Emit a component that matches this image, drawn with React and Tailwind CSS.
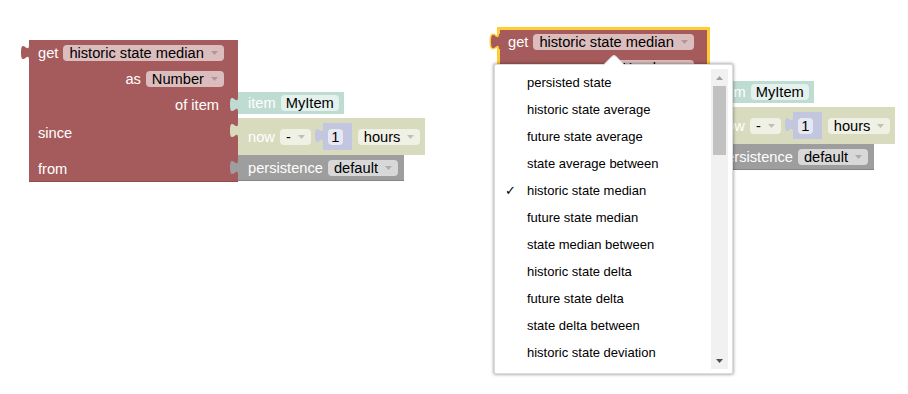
import React from "react";

function Tab({ fill, selected }) {
  return (
    <svg
      width="11"
      height="15"
      viewBox="0 0 11 15"
      overflow="visible"
      className="absolute left-[-8px] top-[5px] z-10"
    >
      {selected && (
        <path d="M8 0 C8 10 0 -8 0 7.5 S8 5 8 15" fill="none" stroke="#ffcc33" strokeWidth="3" />
      )}
      <path d="M11 0 H8 C8 10 0 -8 0 7.5 S8 5 8 15 H11 Z" fill={fill} />
    </svg>
  );
}

function Arrow({ className }) {
  return (
    <svg width="7" height="4" viewBox="0 0 7 4" className={className}>
      <path d="M0 0 H7 L3.5 4 Z" fill="currentColor" />
    </svg>
  );
}

function Dropdown({ text, bg }) {
  return (
    <div className={"flex items-center h-[16px] rounded-[4px] pl-[6px] pr-[6px] " + bg}>
      <span className="text-black leading-[16px]">{text}</span>
      <Arrow className="ml-[7px] text-black/20" />
    </div>
  );
}

function ItemBlock() {
  return (
    <div className="relative flex items-center h-[22px] bg-[#bfdcd2] pl-[10px] pr-[5px] gap-[5px]">
      <Tab fill="#bfdcd2" />
      <span className="leading-[16px]">item</span>
      <div className="h-[16px] rounded-[4px] bg-[#e5f1ed] px-[5px] text-black leading-[16px]">MyItem</div>
    </div>
  );
}

function NowBlock() {
  return (
    <div className="relative flex items-center h-[37px] bg-[#d9dbbe] pl-[10px] pr-[5px]">
      <Tab fill="#d9dbbe" />
      <span className="leading-[16px]">now</span>
      <div className="ml-[5px]">
        <Dropdown text="-" bg="bg-[#f0f1e5]" />
      </div>
      <div className="relative ml-[12px] flex items-center h-[27px] bg-[#c3c6df] pl-[5px] pr-[9px]">
        <Tab fill="#c3c6df" />
        <div className="h-[16px] w-[15px] rounded-[4px] bg-[#e7e8f2] text-black leading-[16px] text-center">1</div>
      </div>
      <div className="ml-[6px]">
        <Dropdown text="hours" bg="bg-[#f0f1e5]" />
      </div>
    </div>
  );
}

function PersistenceBlock() {
  return (
    <div className="relative flex items-center h-[25px] bg-[#9e9e9e] pl-[10px] pr-[6px] gap-[5px] shadow-[0_1px_0_#858585]">
      <Tab fill="#9e9e9e" />
      <span className="leading-[16px]">persistence</span>
      <Dropdown text="default" bg="bg-[#d8d8d8]" />
    </div>
  );
}

function Block({ selected }) {
  return (
    <div className="flex text-[14.67px] text-white">
      <div
        className={
          "relative w-[209px] bg-[#a55b5b] " +
          (selected
            ? "outline-[3px] outline-solid outline-[#ffcc33] outline-offset-[-1px]"
            : "shadow-[0_1px_0_#8d4d4d]")
        }
      >
        <Tab fill="#a55b5b" selected={selected} />
        <div className="h-[26px] flex items-center pl-[9px] gap-[5px]">
          <span className="leading-[16px]">get</span>
          <Dropdown text="historic state median" bg="bg-[#dbbdbd]" />
        </div>
        <div className="h-[25px] flex items-center justify-end pr-[14px] gap-[5px]">
          <span className="leading-[16px]">as</span>
          <Dropdown text="Number" bg="bg-[#dbbdbd]" />
        </div>
        <div className="h-[25px] flex justify-end pr-[19px] pt-[6px]">
          <span className="leading-[17px]">of item</span>
        </div>
        <div className="h-[39px] pl-[9px] pt-[6px]">
          <span className="leading-[17px]">since</span>
        </div>
        <div className="h-[26px] pl-[9px] pt-[3px]">
          <span className="leading-[17px]">from</span>
        </div>
      </div>
      <div className="flex flex-col items-start">
        <div className="h-[51px]" />
        <div className="h-[25px] pt-[1px]">
          <ItemBlock />
        </div>
        <div className="h-[39px] pt-[2px]">
          <NowBlock />
        </div>
        <div className="h-[26px]">
          <PersistenceBlock />
        </div>
      </div>
    </div>
  );
}

const ITEMS = [
  "persisted state",
  "historic state average",
  "future state average",
  "state average between",
  "historic state median",
  "future state median",
  "state median between",
  "historic state delta",
  "future state delta",
  "state delta between",
  "historic state deviation",
];

function Menu() {
  return (
    <>
      <div className="absolute left-[606px] top-[57px] w-[16px] h-[16px] rotate-45 bg-white border-t border-l border-[#dadce0] rounded-tl-[4px] z-30" />
      <div className="absolute left-[494px] top-[64px] w-[239px] h-[310px] z-20 bg-white border border-[#dadce0] rounded-[2px] shadow-[0_0_3px_1px_rgba(0,0,0,0.3)] p-[4px] flex">
        <div className="w-[212px] h-[300px] overflow-hidden text-[13px] text-black">
          {ITEMS.map((t, i) => (
            <div key={t} className="relative h-[27px] flex items-center pl-[28px] whitespace-nowrap">
              {i === 4 && (
                <span className="absolute left-[6px] font-['DejaVu_Sans',sans-serif] text-[13px]">✓</span>
              )}
              {t}
            </div>
          ))}
        </div>
        <div className="w-[17px] h-[300px] bg-[#f1f1f1] flex flex-col items-center">
          <div className="h-[17px] flex items-center justify-center">
            <svg width="7" height="4" viewBox="0 0 7 4">
              <path d="M0 4 H7 L3.5 0 Z" fill="#a3a3a3" />
            </svg>
          </div>
          <div className="w-[13px] h-[69px] bg-[#c1c1c1]" />
          <div className="flex-1" />
          <div className="h-[17px] flex items-center justify-center">
            <svg width="7" height="4" viewBox="0 0 7 4">
              <path d="M0 0 H7 L3.5 4 Z" fill="#505050" />
            </svg>
          </div>
        </div>
      </div>
    </>
  );
}

export default function App() {
  return (
    <div className="relative w-[908px] h-[394px] bg-white overflow-hidden font-['Liberation_Sans',Arial,sans-serif]">
      <div className="absolute left-[29px] top-[40px]">
        <Block />
      </div>
      <div className="absolute left-[499px] top-[29px]">
        <Block selected />
      </div>
      <Menu />
    </div>
  );
}
